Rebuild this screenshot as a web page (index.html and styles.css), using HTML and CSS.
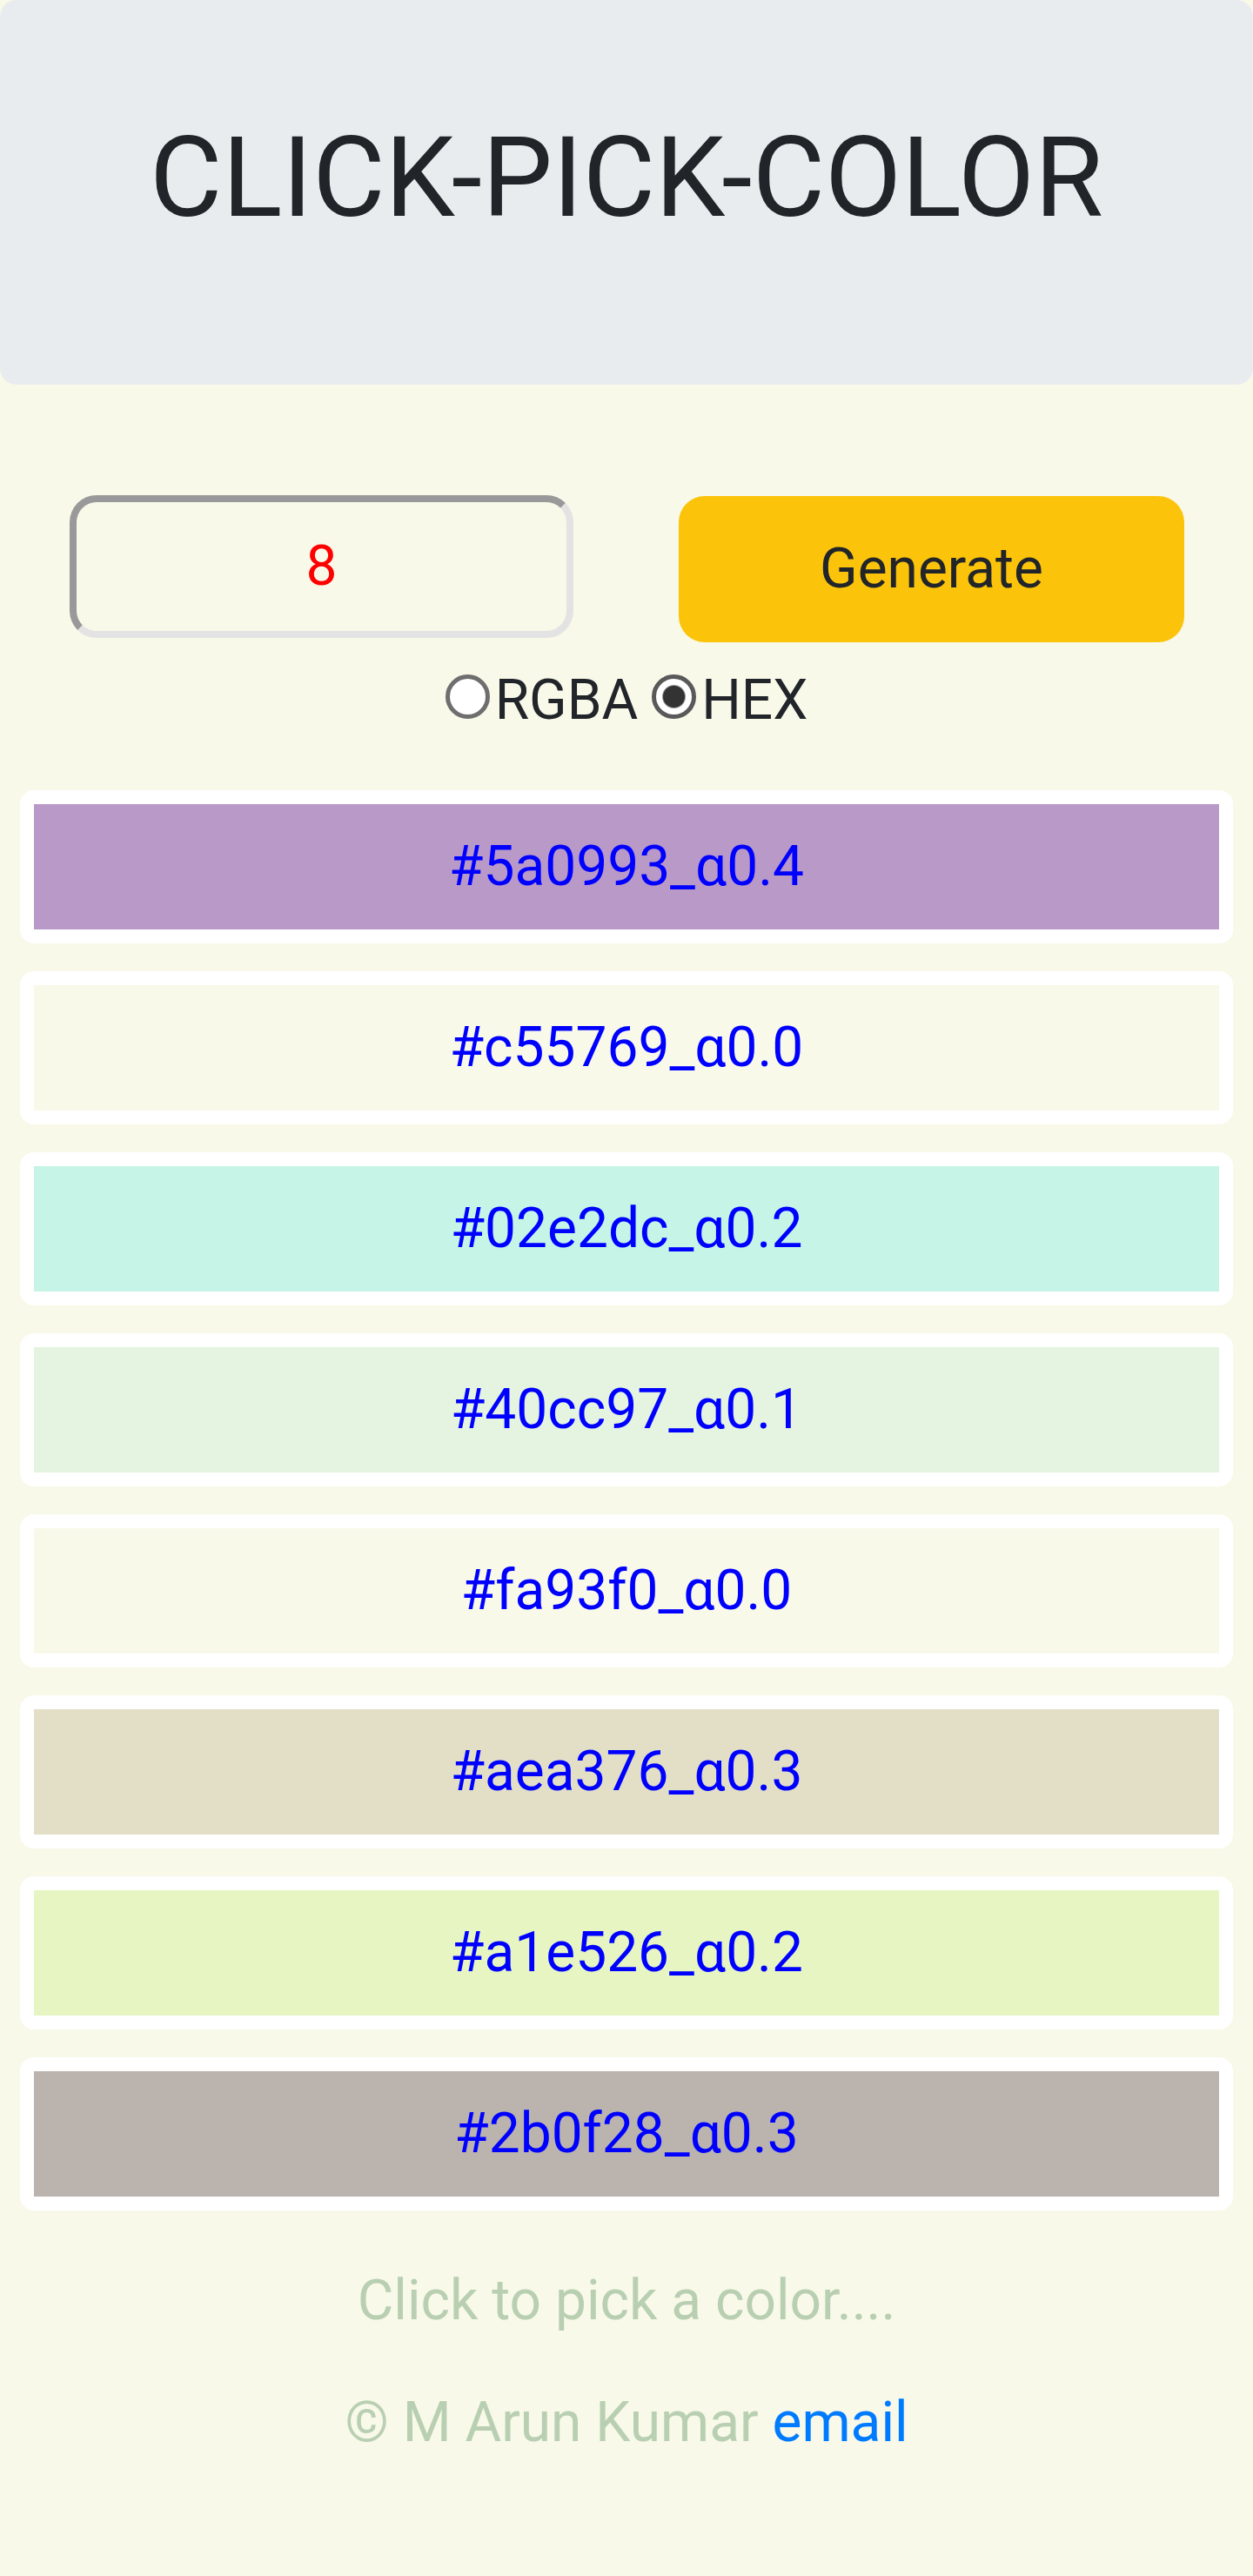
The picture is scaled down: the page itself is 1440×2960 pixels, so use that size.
FILE: index.html
```html
<!DOCTYPE html>
<html lang="en">
<head>
<meta charset="utf-8">
<title>CLICK-PICK-COLOR</title>
<link rel="stylesheet" href="styles.css">
</head>
<body>
  <header class="jumbo">
    <h2 class="title">CLICK-PICK-COLOR</h2>
  </header>

  <div class="controls">
    <input class="count" type="text" value="8">
    <button class="generate" type="button">Generate</button>
  </div>

  <div class="modes">
    <label class="mode"><input class="radio" type="radio" name="mode">RGBA</label>
    <label class="mode"><input class="radio" type="radio" name="mode" checked>HEX</label>
  </div>

  <div class="swatches">
    <div class="swatch" style="background-color: rgba(90,9,147,0.4)">#5a0993_α0.4</div>
    <div class="swatch" style="background-color: rgba(197,87,105,0.0)">#c55769_α0.0</div>
    <div class="swatch" style="background-color: rgba(2,226,220,0.2)">#02e2dc_α0.2</div>
    <div class="swatch" style="background-color: rgba(64,204,151,0.1)">#40cc97_α0.1</div>
    <div class="swatch" style="background-color: rgba(250,147,240,0.0)">#fa93f0_α0.0</div>
    <div class="swatch" style="background-color: rgba(174,163,118,0.3)">#aea376_α0.3</div>
    <div class="swatch" style="background-color: rgba(161,229,38,0.2)">#a1e526_α0.2</div>
    <div class="swatch" style="background-color: rgba(43,15,40,0.3)">#2b0f28_α0.3</div>
  </div>

  <p class="hint">Click to pick a color....</p>
  <p class="credit">© M Arun Kumar <a class="email" href="#">email</a></p>
</body>
</html>
```
FILE: styles.css
```css
html, body {
  margin: 0;
  padding: 0;
}

body {
  background: #f8f9e9;
  font-family: Roboto, "Liberation Sans", sans-serif;
  font-size: 64px;
  line-height: 96px;
  color: #212529;
}

.jumbo {
  background: #e9ecef;
  border-radius: 19px;
  padding: 128px 64px;
  margin-bottom: 128px;
}

.title {
  margin: 0 0 32px;
  font-size: 128px;
  line-height: 153.6px;
  font-weight: 400;
  text-align: center;
  color: #212529;
}

.controls {
  display: flex;
  justify-content: space-between;
  align-items: flex-start;
  padding: 0 79px 0 80px;
}

.count {
  box-sizing: border-box;
  width: 579px;
  height: 164px;
  margin: -1px 0 0;
  border-width: 8px;
  border-style: solid;
  border-color: #999999 #e3e3e3 #e3e3e3 #999999;
  border-radius: 31px;
  background: transparent;
  font-family: Roboto, "Liberation Sans", sans-serif;
  font-size: 64px;
  color: #ff0000;
  text-align: center;
  padding: 0;
  outline: none;
}

.generate {
  box-sizing: border-box;
  width: 581px;
  height: 168px;
  border: none;
  border-radius: 30px;
  background: #fcc30b;
  color: #212529;
  font-family: Roboto, "Liberation Sans", sans-serif;
  font-size: 64px;
  line-height: 96px;
  padding: 0;
}

.modes {
  margin-top: 19px;
  text-align: center;
  height: 96px;
}

.mode {
  display: inline;
}

.radio {
  -webkit-appearance: none;
  appearance: none;
  box-sizing: border-box;
  display: inline-block;
  width: 51px;
  height: 51px;
  margin: 0 6px 0 0;
  border: 5px solid #6e6e6e;
  border-radius: 50%;
  background: #ffffff;
  vertical-align: baseline;
}

.radio:checked {
  border-color: #595959;
  background: radial-gradient(circle, #333333 0 12px, #ffffff 14px);
}

.swatches {
  margin-top: 55px;
}

.swatch {
  margin: 0 23px 32px;
  border: 16px solid #ffffff;
  border-radius: 16px;
  background-clip: padding-box;
  padding: 24px 0;
  text-align: center;
  color: #0000ff;
}

.swatch:last-child {
  margin-bottom: 0;
}

.hint {
  margin: 56px 0 0;
  text-align: center;
  color: #b9cfb2;
}

.credit {
  margin: 44px 0 0;
  text-align: center;
  color: #b9cfb2;
}

.email {
  color: #007bff;
  text-decoration: none;
}
```
